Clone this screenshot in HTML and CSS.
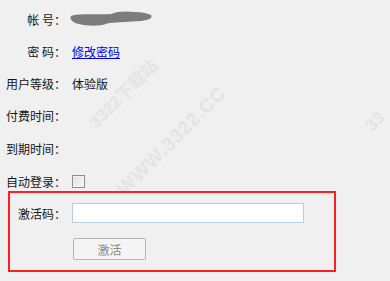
FILE: index.html
```html
<!DOCTYPE html>
<html lang="zh-CN">
<head>
<meta charset="utf-8">
<link rel="stylesheet" href="styles.css">
</head>
<body>
<div class="page">
  <div class="form">
    <div class="row">
      <span class="label">帐 号：</span>
      <span class="value"><svg class="blur" width="84" height="18" viewBox="0 0 84 18"><path d="M2 6 C10 3 30 5 42 4 C48 1 58 1 66 2 C72 2 78 3 82 5 C84 8 80 10 72 11 C60 12 50 12 40 13 C30 17 18 16 10 14 C4 13 0 9 2 6 Z" fill="#7c7c7c"/></svg></span>
    </div>
    <div class="row">
      <span class="label">密 码：</span>
      <a class="value link" href="#">修改密码</a>
    </div>
    <div class="row">
      <span class="label">用户等级：</span>
      <span class="value">体验版</span>
    </div>
    <div class="row tall">
      <span class="label">付费时间：</span>
      <span class="value"></span>
    </div>
    <div class="row tall">
      <span class="label">到期时间：</span>
      <span class="value"></span>
    </div>
    <div class="row tall">
      <span class="label">自动登录：</span>
      <span class="value"><span class="check"></span></span>
    </div>
  </div>
  <div class="activate">
    <div class="arow">
      <span class="alabel">激活码：</span>
      <input class="code" type="text">
    </div>
    <div class="arow btnrow">
      <button class="btn" type="button">激活</button>
    </div>
  </div>
  <div class="wm wm1">3322下载站</div>
  <div class="wm wm2">WWW.3322.CC</div>
  <div class="wm wm3">33</div>
</div>
</body>
</html>
```
FILE: styles.css
```css
html, body {
  margin: 0;
  padding: 0;
  background: #f0f0f0;
}
body {
  width: 390px;
  height: 281px;
  overflow: hidden;
  font-family: "Noto Sans CJK SC", "Liberation Sans", sans-serif;
  font-size: 12px;
  color: #151515;
}
.page {
  position: relative;
  padding: 3px 0 0 6px;
}
.form {
  display: flex;
  flex-direction: column;
}
.row {
  display: flex;
  align-items: center;
  height: 32px;
}
.row.tall {
  height: 33px;
}
.label {
  width: 60px;
  text-align: right;
  white-space: pre;
  flex: none;
}
.value {
  margin-left: 6px;
  display: flex;
  align-items: center;
}
.blur {
  margin-left: -3px;
  display: block;
}
.link {
  color: #0000ee;
  text-decoration: underline;
}
.check {
  width: 11px;
  height: 11px;
  border: 1px solid #8f8f8f;
  background: linear-gradient(135deg, #dcdcdc, #fbfbfb);
  box-shadow: inset 0 0 0 1px #f4f4f4;
}
.activate {
  position: relative;
  z-index: 1;
  margin: -7px 0 0 2px;
  width: 324px;
  height: 67px;
  border: 2px solid #ff1f1f;
  display: flex;
  flex-direction: column;
  padding-top: 10px;
  box-sizing: content-box;
}
.arow {
  display: flex;
  align-items: center;
}
.alabel {
  width: 56px;
  text-align: right;
  flex: none;
}
.code {
  margin: 0 0 0 6px;
  width: 230px;
  height: 18px;
  padding: 0;
  border: 1px solid #b7cde0;
  background: #fff;
  box-sizing: content-box;
  outline: none;
}
.btnrow {
  margin-top: 15px;
  padding-left: 63px;
}
.btn {
  width: 73px;
  height: 22px;
  padding: 0;
  border: 1px solid #b3b3b3;
  border-radius: 2px;
  background: #f4f4f4;
  color: #8a8a8a;
  font-family: "Noto Sans CJK SC", "Liberation Sans", sans-serif;
  font-size: 12px;
}
.wm {
  position: absolute;
  color: #e4e4e4;
  font-family: "Liberation Sans", "Noto Sans CJK SC", sans-serif;
  font-weight: bold;
  white-space: nowrap;
  transform: rotate(-45deg);
  transform-origin: center;
  pointer-events: none;
}
.wm1 {
  left: 78px;
  top: 80px;
  font-size: 17px;
}
.wm2 {
  left: 100px;
  top: 130px;
  font-size: 19px;
  letter-spacing: 1px;
}
.wm3 {
  left: 366px;
  top: 112px;
  font-size: 17px;
}
```
